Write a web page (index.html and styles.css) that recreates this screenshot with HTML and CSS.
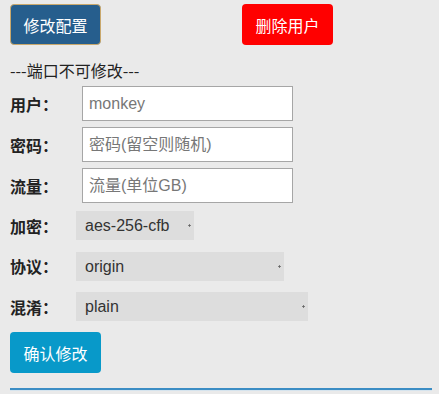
FILE: index.html
```html
<!DOCTYPE html>
<html lang="zh">
<head>
  <meta charset="UTF-8">
  <meta name="viewport" content="width=device-width, initial-scale=1.0">
  <title>修改配置</title>
  <link rel="stylesheet" href="styles.css">
</head>
<body class="body">
  <div class="container">
    <div class="actions">
      <button class="btn btn-edit">修改配置</button>
      <button class="btn btn-delete">删除用户</button>
    </div>
    <p class="note">---端口不可修改---</p>
    <form class="form">
      <div class="row">
        <label class="label label-input">用户：</label>
        <input class="input" type="text" placeholder="monkey">
      </div>
      <div class="row">
        <label class="label label-input">密码：</label>
        <input class="input" type="text" placeholder="密码(留空则随机)">
      </div>
      <div class="row">
        <label class="label label-input">流量：</label>
        <input class="input" type="text" placeholder="流量(单位GB)">
      </div>
      <div class="row row-select row-first">
        <label class="label label-select">加密：</label>
        <select class="select select-method">
          <option>aes-256-cfb</option>
        </select>
      </div>
      <div class="row row-select">
        <label class="label label-select">协议：</label>
        <select class="select select-protocol">
          <option>origin</option>
        </select>
      </div>
      <div class="row row-select">
        <label class="label label-select">混淆：</label>
        <select class="select select-obfs">
          <option>plain</option>
        </select>
      </div>
      <button class="btn btn-confirm" type="button">确认修改</button>
    </form>
    <hr class="line">
  </div>
</body>
</html>
```
FILE: styles.css
```css
.body {
  margin: 0;
  background-color: #eaeaea;
  font-family: "Liberation Sans", "Noto Sans CJK SC", sans-serif;
  font-size: 16px;
  color: #333333;
}
.container {
  padding: 4px 7px 0 10px;
}
.actions {
  display: flex;
}
.btn {
  width: 91px;
  height: 41px;
  padding: 0;
  border: none;
  border-radius: 4px;
  font-family: "Noto Sans CJK SC", sans-serif;
  font-size: 16px;
  color: #ffffff;
  cursor: pointer;
}
.btn-edit {
  background-color: #265e8d;
  border: 1px solid #c9a86c;
}
.btn-delete {
  margin-left: 141px;
  background-color: #ff0000;
}
.btn-confirm {
  margin-top: 11px;
  background-color: #0899c9;
}
.note {
  margin: 15px 0 0;
  line-height: 20px;
  font-family: "Noto Sans CJK SC", sans-serif;
  color: #222222;
}
.form {
  margin-top: 6px;
}
.row {
  display: flex;
  align-items: center;
  height: 35px;
  margin-bottom: 6px;
}
.row-select {
  height: 29px;
  margin: 11.5px 0 0;
}
.row-first {
  margin-top: 8px;
}
.label {
  font-family: "Noto Sans CJK SC", sans-serif;
  font-weight: 700;
  color: #222222;
}
.label-input {
  width: 72px;
}
.label-select {
  width: 66px;
}
.input {
  box-sizing: border-box;
  width: 211px;
  height: 35px;
  padding: 0 6px;
  border: 1px solid #a6a6a6;
  background-color: #ffffff;
  font-family: "Liberation Sans", "Noto Sans CJK SC", sans-serif;
  font-size: 16px;
  color: #333333;
}
.input::placeholder {
  color: #777777;
}
.select {
  box-sizing: border-box;
  height: 29px;
  padding: 0 9px;
  border: none;
  appearance: none;
  background-color: #dddddd;
  background-image: radial-gradient(circle, #666666 45%, transparent 55%);
  background-size: 3px 3px;
  background-repeat: no-repeat;
  background-position: right 3px center;
  font-family: "Liberation Sans", sans-serif;
  font-size: 16px;
  color: #333333;
}
.select-method {
  width: 118px;
}
.select-protocol {
  width: 208px;
}
.select-obfs {
  width: 232px;
}
.line {
  margin: 15px 0 0;
  border: none;
  border-top: 2px solid #3b8dc4;
  border-bottom: 1px solid #d6e4ee;
}
```
